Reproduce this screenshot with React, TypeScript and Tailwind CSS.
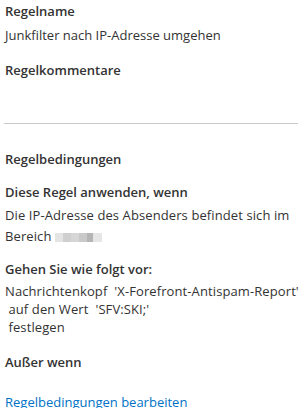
export default function App() {
  return (
    <div className="h-[408px] w-[299px] overflow-hidden bg-white pl-[5px] text-[13px] leading-[18px] text-[#333333] [font-family:'Open_Sans',sans-serif]">
      <div className="pt-[2px] font-semibold">Regelname</div>
      <div className="mt-[6px]">Junkfilter nach IP-Adresse umgehen</div>
      <div className="mt-[17px] font-semibold">Regelkommentare</div>
      <div className="mt-[44px] mr-[1px] -ml-[1px] border-t border-[#c8c8c8]" />
      <div className="mt-[26px] font-semibold">Regelbedingungen</div>
      <div className="mt-[15px] font-semibold">Diese Regel anwenden, wenn</div>
      <div className="mt-[4px] leading-[21px] tracking-[0.1px]">
        Die IP-Adresse des Absenders befindet sich im Bereich{' '}
        <span className="inline-flex h-[9px] w-[47px] align-middle">
          <span className="w-[8px] bg-[#e4e4e4]" />
          <span className="w-[8px] bg-[#cfcfcf]" />
          <span className="w-[8px] bg-[#d6d6d6]" />
          <span className="w-[8px] bg-[#c9c9c9]" />
          <span className="w-[6px] bg-[#b5b5b5]" />
          <span className="w-[9px] bg-[#e6e6e6]" />
        </span>
      </div>
      <div className="mt-[13px] font-semibold">Gehen Sie wie folgt vor:</div>
      <div className="mt-[4px] whitespace-pre tracking-[0.1px]">
        {"Nachrichtenkopf  'X-Forefront-Antispam-Report'\n auf den Wert  'SFV:SKI;'\n festlegen"}
      </div>
      <div className="mt-[17px] font-semibold">Außer wenn</div>
      <a className="mt-[22px] block text-[#0072c6]" href="#">
        Regelbedingungen bearbeiten
      </a>
    </div>
  );
}
